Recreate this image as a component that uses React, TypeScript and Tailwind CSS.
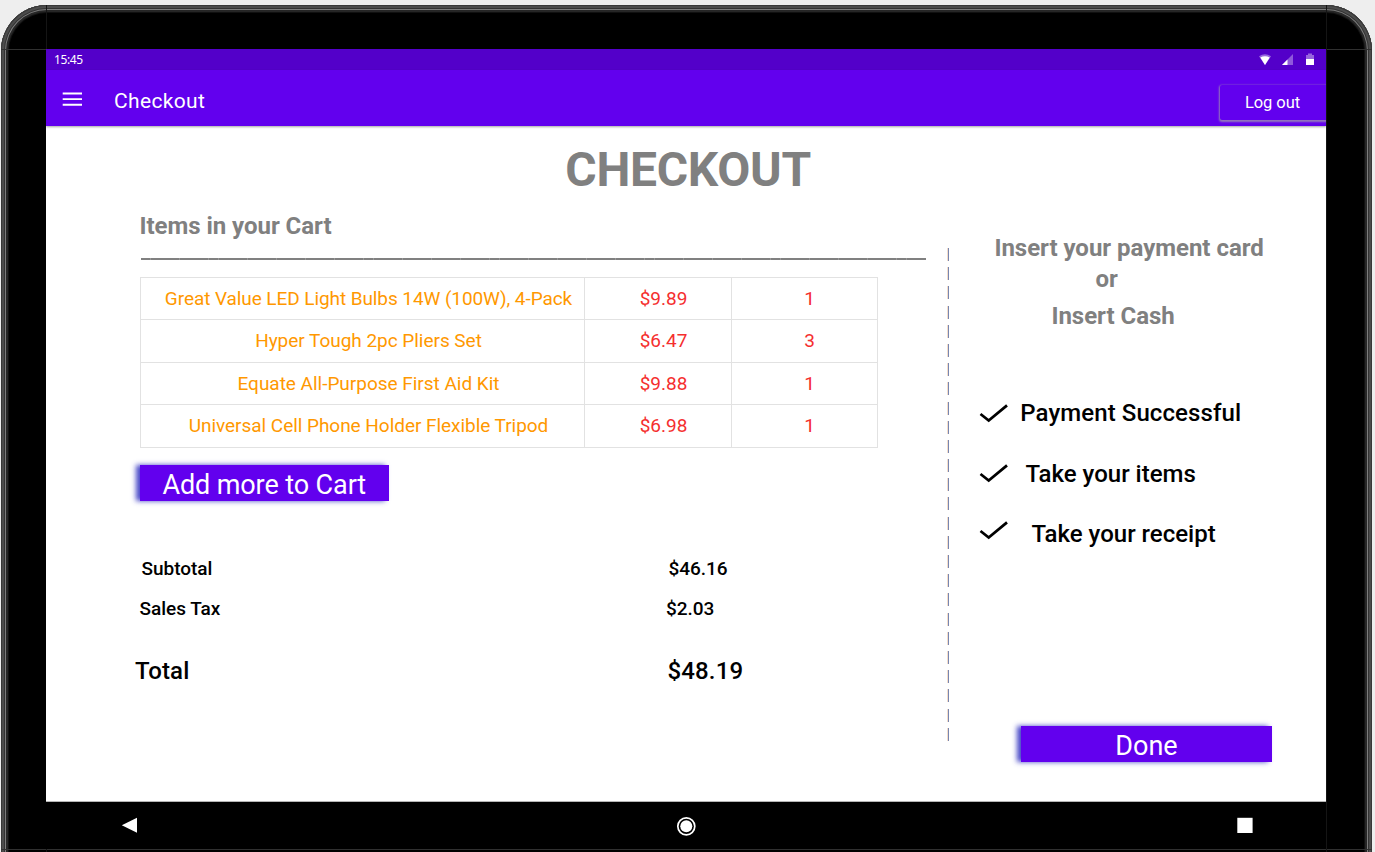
import React from "react";

const items = [
  { name: "Great Value LED Light Bulbs 14W (100W), 4-Pack", price: "$9.89", qty: 1, h: "h-[42px]", track: "tracking-[-0.08px]" },
  { name: "Hyper Tough 2pc Pliers Set", price: "$6.47", qty: 3, h: "h-[43px]", track: "tracking-[-0.03px]" },
  { name: "Equate All-Purpose First Aid Kit", price: "$9.88", qty: 1, h: "h-[42px]", track: "tracking-[-0.02px]" },
  { name: "Universal Cell Phone Holder Flexible Tripod", price: "$6.98", qty: 1, h: "h-[43px]", track: "tracking-[-0.04px]" },
];

const dashes = Array.from({ length: 26 }, (_, i) => i);

function Check() {
  return (
    <svg width="30" height="20" viewBox="0 0 30 20" fill="none" stroke="#000" strokeWidth="2.7" className="block shrink-0">
      <path d="M1.5 10 L9.7 16.6 L28 1.4" />
    </svg>
  );
}

function StatusBar() {
  return (
    <div className="flex h-[21px] items-center bg-[#5300c9] pl-2 pr-[10px] text-white">
      <span className="font-[Noto_Sans,sans-serif] text-[12px] leading-[21px] tracking-[-0.4px]">15:45</span>
      <svg className="ml-auto block" width="58" height="14" viewBox="0 0 58 14" fill="#fff">
        <path d="M1 3.2 Q7 -0.5 13 3.2 L7 12 Z" opacity=".4" />
        <path d="M2.3 4.6 Q7 2 11.7 4.6 L7 12 Z" />
        <path d="M35 1 V12 H24 Z" opacity=".35" />
        <path d="M29.5 6.5 V12 H24 Z" />
        <path d="M48 2 H50 V0.5 H54 V2 H56 V6 H48 Z" opacity=".4" />
        <path d="M48 6 H56 V12 H48 Z" />
      </svg>
    </div>
  );
}

function AppBar() {
  return (
    <header className="flex h-[55.5px] bg-[#6200ee] text-white shadow-[0_1px_2px_rgba(0,0,0,0.35)]">
      <svg className="ml-4 mt-[22px] block" width="21" height="15" viewBox="0 0 21 15" fill="#fff">
        <path d="M.7 .6H20v1.9H.7zM.7 6.2H20v1.9H.7zM.7 11.8H20v1.9H.7z" />
      </svg>
      <h2 className="ml-[31px] mt-4 whitespace-nowrap text-[21px] leading-[30px] tracking-[0.35px]">Checkout</h2>
      <div className="ml-auto h-[56px] w-[109px] overflow-hidden pl-[3px]">
        <button className="mt-[15px] h-[35px] w-[107px] rounded-l-[2px] bg-[#6200ee] pr-[2px] text-center text-[16.5px] leading-[36px] tracking-[-0.05px] shadow-[0_1px_2px_1px_rgba(160,150,175,0.8)]">Log out</button>
      </div>
    </header>
  );
}

function Cart() {
  return (
    <section className="w-[902px] text-black">
      <h3 className="ml-[93.4px] mt-[14px] whitespace-nowrap text-[24px] font-bold leading-[30px] tracking-[-0.03px] text-[#808080]">Items in your Cart</h3>
      <div className="ml-[95px] mt-[17px] h-[2px] w-[785px] bg-[repeating-linear-gradient(90deg,#808080_0px,#808080_9.3px,#999999_9.3px,#999999_9.69px)]" />
      <div className="ml-[94px] mt-[17px] w-[738px] border-l border-t border-[#e2e2e2] text-center text-[19px]">
        {items.map((it) => (
          <div key={it.name} className={`flex items-center ${it.h} leading-[42px]`}>
            <div className={`h-full w-[444px] whitespace-nowrap border-b border-r border-[#e2e2e2] pl-3 text-[#ff9800] ${it.track}`}>{it.name}</div>
            <div className="h-full w-[147px] border-b border-r border-[#e2e2e2] pl-[11px] text-[#f52f2f]">{it.price}</div>
            <div className="h-full w-[146px] border-b border-r border-[#e2e2e2] pl-[10px] text-[#f52f2f]">{it.qty}</div>
          </div>
        ))}
      </div>
      <button className="ml-[93.5px] mt-[17px] block h-[36px] w-[249.5px] bg-[#6200ee] text-center text-[27px] leading-[40px] tracking-[-0.1px] text-white shadow-[-4px_0_5px_rgba(40,40,190,0.85)]">Add more to Cart</button>
      <dl className="mt-[53px] text-[19px] font-medium leading-[30px] tracking-[-0.03px]">
        <div className="flex"><dt className="ml-[95.5px] w-[527px]">Subtotal</dt><dd>$46.16</dd></div>
        <div className="mt-[10px] flex"><dt className="ml-[93.5px] w-[526.5px]">Sales Tax</dt><dd>$2.03</dd></div>
        <div className="mt-[32px] flex text-[24px] tracking-[0.15px]"><dt className="ml-[89px] w-[532.5px]">Total</dt><dd>$48.19</dd></div>
      </dl>
    </section>
  );
}

function Payment() {
  return (
    <aside className="flex-1 whitespace-nowrap">
      <div className="ml-[45.4px] mt-[36px] text-[24px] font-bold leading-[30px] tracking-[-0.02px] text-[#808080]">
        <p>Insert your payment card</p>
        <p className="ml-[101px] mt-[1px]">or</p>
        <p className="ml-[57px] mt-[7px]">Insert Cash</p>
      </div>
      <ul className="ml-[30px] mt-[67px] text-[24px] font-medium leading-[30px] text-black">
        <li className="flex items-start"><div className="mt-[6px]"><Check /></div><span className="ml-[11.3px] tracking-[0.09px]">Payment Successful</span></li>
        <li className="mt-[31px] flex items-start"><div className="mt-[5px]"><Check /></div><span className="ml-[16.5px]">Take your items</span></li>
        <li className="mt-[30px] flex items-start"><div className="mt-[2px]"><Check /></div><span className="ml-[22.5px]">Take your receipt</span></li>
      </ul>
      <button className="ml-[72px] mt-[177px] block h-[36px] w-[251px] bg-[#6200ee] text-center text-[27px] leading-[40px] text-white shadow-[-4px_0_5px_rgba(40,40,190,0.85)]">Done</button>
    </aside>
  );
}

export default function App() {
  return (
    <div className="h-[852px] w-[1375px] overflow-hidden bg-[#eeeeee] font-[Roboto,sans-serif]">
      <div className="relative ml-px mt-[5px] h-[900px] w-[1371px] rounded-[46px] bg-black pl-[45px] pr-[46px] pt-[44px] shadow-[inset_0_0_0_1px_#383838,inset_0_0_0_3px_#4c4c4c,inset_0_0_0_4px_#333,inset_0_0_0_5px_#7c7c7c,inset_0_0_0_7px_#262626,inset_0_0_0_8px_#101010]">
        <div className="absolute inset-x-0 top-[44px] h-px bg-[#303030]" />
        <div className="absolute inset-x-0 top-[844px] h-px bg-[#303030]" />
        <div className="absolute bottom-0 left-[45px] top-0 w-px bg-[#151515]" />
        <div className="absolute bottom-0 right-[45px] top-0 w-px bg-[#151515]" />
        <div className="relative h-[753px] border-b border-[#b5b5b5] bg-white">
          <StatusBar />
          <AppBar />
          <h1 className="ml-[519.3px] mt-[14.5px] whitespace-nowrap text-[48px] font-bold leading-[60px] tracking-[-0.3px] text-[#808080]">CHECKOUT</h1>
          <div className="-mt-[3px] flex">
            <Cart />
            <div className="mt-[51px] flex w-px flex-col gap-[6.2px]">
              {dashes.map((d) => (
                <div key={d} className="h-[13px] w-px shrink-0 bg-[#7886b0] shadow-[-1px_0_0_#f3dccb]" />
              ))}
            </div>
            <Payment />
          </div>
        </div>
        <nav className="relative flex h-[47px] items-start bg-black">
          <svg className="ml-[75px] mt-[15px]" width="17" height="17" viewBox="0 0 17 17" fill="#fff"><path d="M.8 8.3 L16 .8 V15.8 Z" /></svg>
          <svg className="ml-[538px] mt-[14px]" width="20" height="20" viewBox="0 0 20 20"><circle cx="10.3" cy="10.3" r="8.5" fill="none" stroke="#fff" strokeWidth="1.7" /><circle cx="10.3" cy="10.3" r="6" fill="#fff" /></svg>
          <svg className="ml-[541px] mt-[15px]" width="17" height="17" viewBox="0 0 17 17" fill="#fff"><path d="M.3 .8H15.6V16H.3z" /></svg>
        </nav>
      </div>
    </div>
  );
}
